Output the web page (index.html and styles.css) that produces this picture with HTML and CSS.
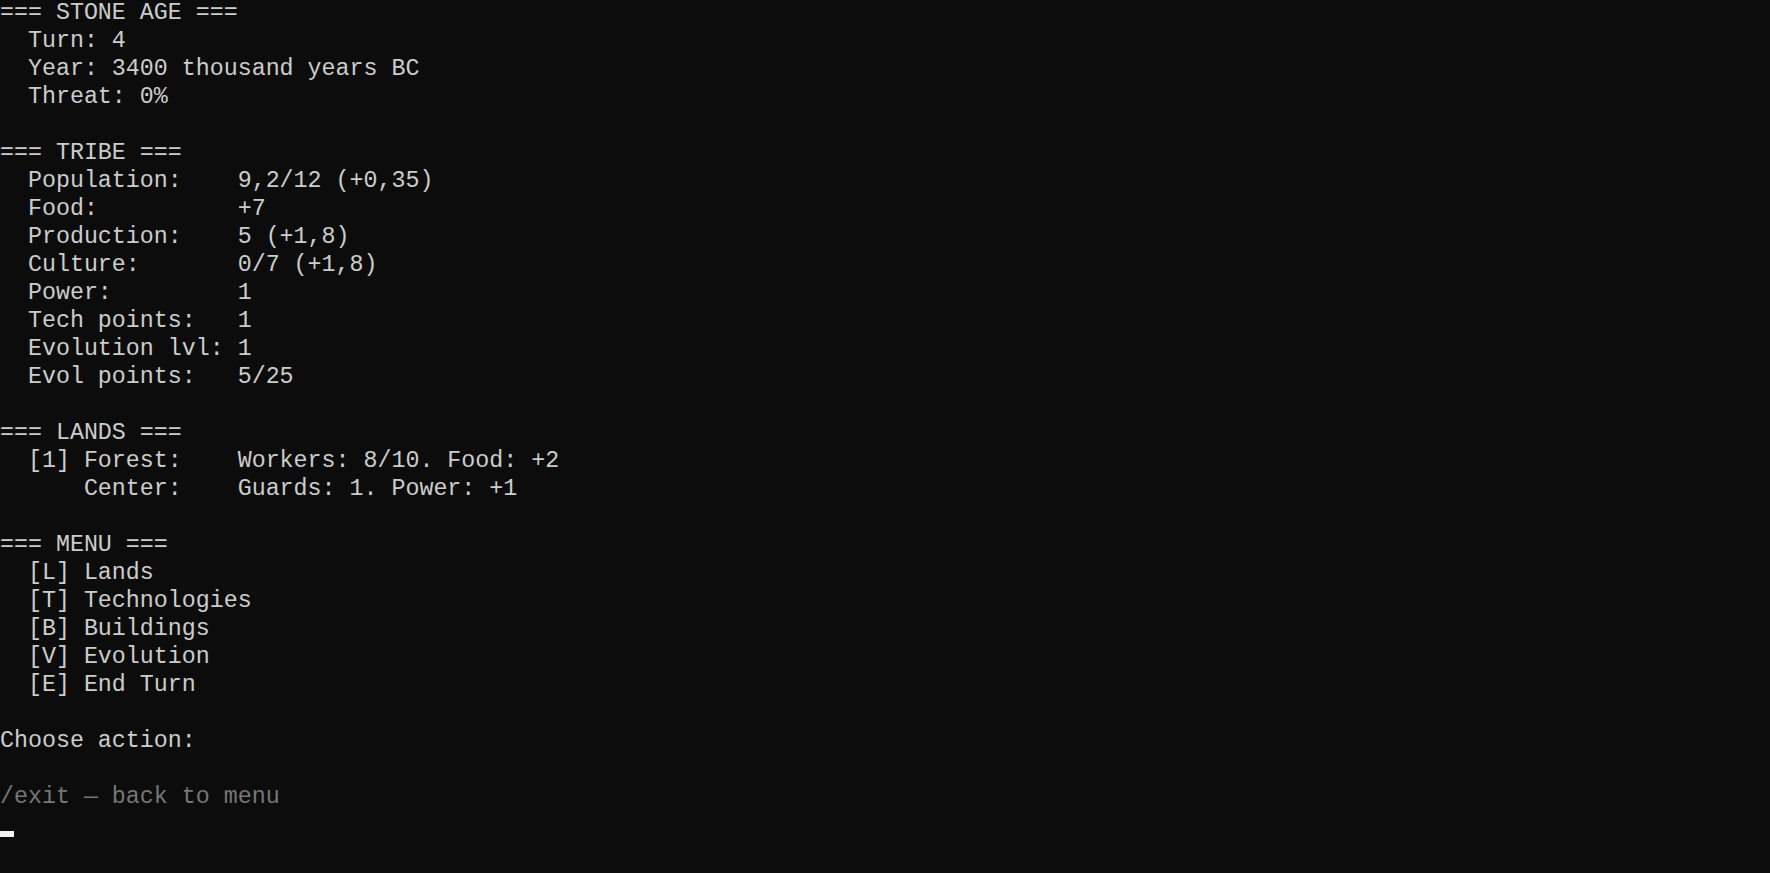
FILE: index.html
```html
<!DOCTYPE html>
<html>
<head>
<meta charset="utf-8">
<link rel="stylesheet" href="styles.css">
</head>
<body>
<main class="terminal">
<pre class="out">=== STONE AGE ===
  Turn: 4
  Year: 3400 thousand years BC
  Threat: 0%

=== TRIBE ===
  Population:    9,2/12 (+0,35)
  Food:          +7
  Production:    5 (+1,8)
  Culture:       0/7 (+1,8)
  Power:         1
  Tech points:   1
  Evolution lvl: 1
  Evol points:   5/25

=== LANDS ===
  [1] Forest:    Workers: 8/10. Food: +2
      Center:    Guards: 1. Power: +1

=== MENU ===
  [L] Lands
  [T] Technologies
  [B] Buildings
  [V] Evolution
  [E] End Turn

Choose action:
</pre>
<pre class="hint">/exit — back to menu</pre>
<div class="prompt"><span class="cursor"></span></div>
</main>
</body>
</html>
```
FILE: styles.css
```css
html, body {
  margin: 0;
  padding: 0;
  background: #0c0c0c;
  height: 100%;
  overflow: hidden;
}
.terminal {
  display: flex;
  flex-direction: column;
  font-family: "Liberation Mono", "DejaVu Sans Mono", monospace;
  font-size: 23.3px;
  line-height: 28px;
  color: #cccccc;
  margin-top: -1px;
}
.out, .hint {
  margin: 0;
  font: inherit;
  white-space: pre;
}
.out {
  color: #cccccc;
}
.hint {
  color: #767676;
  margin-top: 28px;
}
.prompt {
  height: 28px;
  display: flex;
  align-items: flex-end;
}
.cursor {
  display: block;
  width: 14px;
  height: 6px;
  margin-bottom: 2px;
  background: #f2f2f2;
}
```
